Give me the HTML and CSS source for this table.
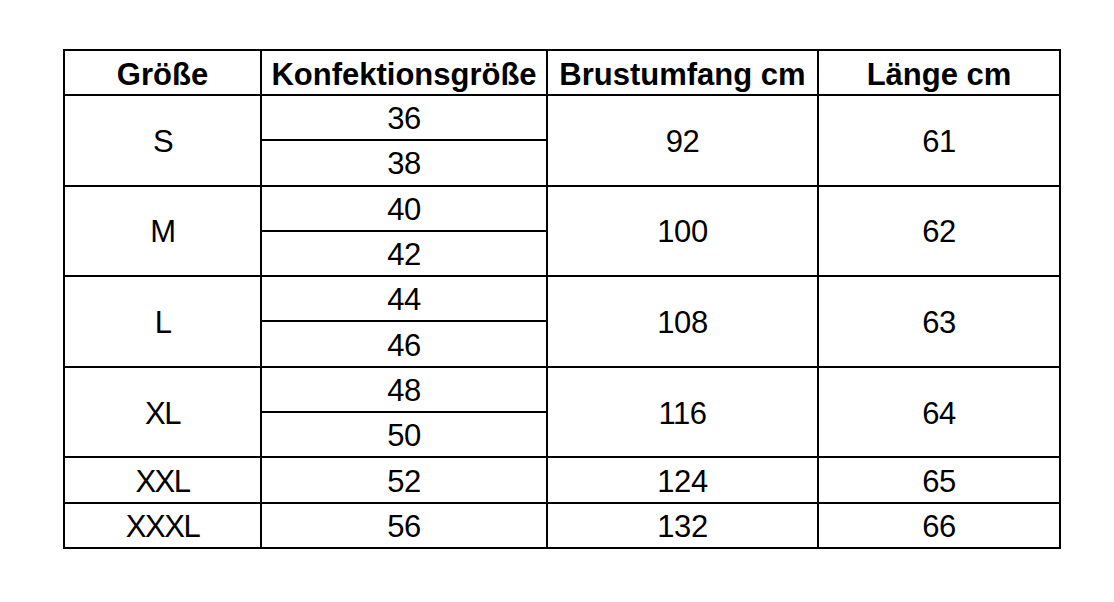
FILE: index.html
```html
<!DOCTYPE html>
<html lang="de">
<head>
<meta charset="utf-8">
<title>Größentabelle</title>
<link rel="stylesheet" href="styles.css">
</head>
<body>
<div class="page">
<table class="sizes">
  <colgroup>
    <col class="c1"><col class="c2"><col class="c3"><col class="c4">
  </colgroup>
  <thead>
    <tr><th>Größe</th><th>Konfektionsgröße</th><th>Brustumfang cm</th><th>Länge cm</th></tr>
  </thead>
  <tbody>
    <tr><td class="size" rowspan="2">S</td><td>36</td><td rowspan="2">92</td><td rowspan="2">61</td></tr>
    <tr><td>38</td></tr>
    <tr><td class="size" rowspan="2">M</td><td>40</td><td rowspan="2">100</td><td rowspan="2">62</td></tr>
    <tr><td>42</td></tr>
    <tr><td class="size" rowspan="2">L</td><td>44</td><td rowspan="2">108</td><td rowspan="2">63</td></tr>
    <tr><td>46</td></tr>
    <tr><td class="size" rowspan="2">XL</td><td>48</td><td rowspan="2">116</td><td rowspan="2">64</td></tr>
    <tr><td>50</td></tr>
    <tr><td class="size">XXL</td><td>52</td><td>124</td><td>65</td></tr>
    <tr><td class="size">XXXL</td><td>56</td><td>132</td><td>66</td></tr>
  </tbody>
</table>
</div>
</body>
</html>
```

FILE: styles.css
```css
html, body {
  margin: 0;
  padding: 0;
  background: #fff;
}
.page {
  padding: 49px 0 0 63px;
}
.sizes {
  border-collapse: collapse;
  table-layout: fixed;
  width: 996px;
  border: 2px solid #000;
  color: #000;
}
.c1 { width: 197px; }
.c2 { width: 286px; }
.c3 { width: 271px; }
.c4 { width: 242px; }
.sizes th, .sizes td {
  border: 2px solid #000;
  padding: 0;
  text-align: center;
  vertical-align: middle;
}
.sizes th {
  height: 40px;
  font-family: "Liberation Sans", Arial, sans-serif;
  font-weight: bold;
  font-size: 31px;
  letter-spacing: 0;
  line-height: 1;
  padding-top: 3px;
}
.sizes td {
  height: 41.3px;
  font-family: "Liberation Sans", Arial, sans-serif;
  font-size: 31px;
  letter-spacing: -0.4px;
  line-height: 1;
  padding-top: 2px;
}
.sizes td.size {
  letter-spacing: -1.5px;
}
```
